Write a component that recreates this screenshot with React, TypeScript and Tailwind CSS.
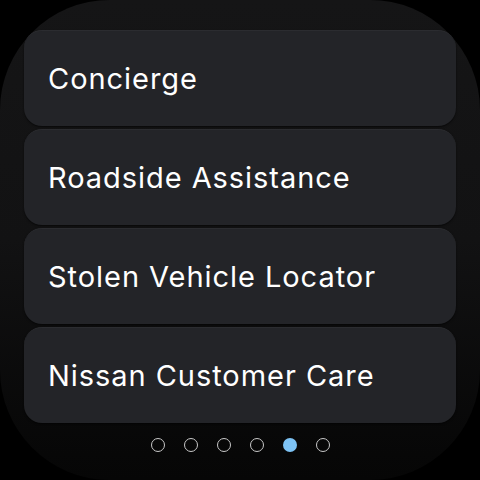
const items = ["Concierge", "Roadside Assistance", "Stolen Vehicle Locator", "Nissan Customer Care"];

export default function App() {
  const active = 4;
  return (
    <div className="w-[480px] h-[480px] bg-black" style={{ fontFamily: "Inter, 'Noto Sans', sans-serif" }}>
      <div className="w-full h-full rounded-[110px] bg-gradient-to-b from-[#151516] via-[#121213] to-[#060606] flex flex-col items-center pt-[30px]">
        <div className="flex flex-col gap-[3px] w-[432px]">
          {items.map((t) => (
            <div
              key={t}
              className="h-[96px] rounded-[18px] bg-[#232428] border-t border-[#2b2c30] shadow-[0_1px_2px_rgba(0,0,0,0.6)] flex items-center pl-6"
            >
              <span className="text-[29px] text-white tracking-[0.95px]">{t}</span>
            </div>
          ))}
        </div>
        <div className="flex gap-[19px] mt-[15px]">
          {[0, 1, 2, 3, 4, 5].map((i) => (
            <div
              key={i}
              className={
                i === active
                  ? "w-[14px] h-[14px] rounded-full bg-[#7dc3f5]"
                  : "w-[14px] h-[14px] rounded-full border-[1.5px] border-[#c8c8c8]"
              }
            />
          ))}
        </div>
      </div>
    </div>
  );
}
